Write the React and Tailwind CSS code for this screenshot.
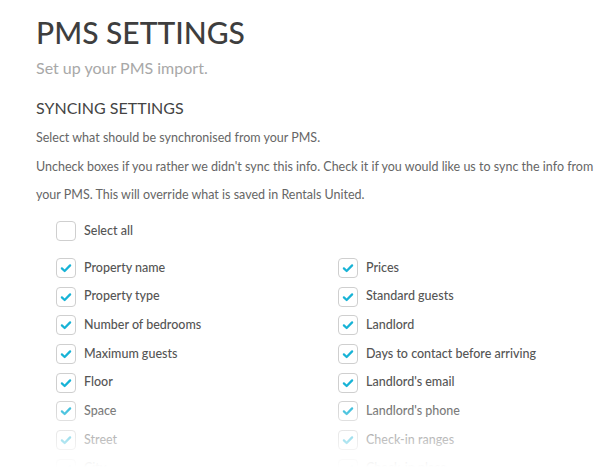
const left = [
  'Property name',
  'Property type',
  'Number of bedrooms',
  'Maximum guests',
  'Floor',
  'Space',
  'Street',
  'City',
]

const right = [
  'Prices',
  'Standard guests',
  'Landlord',
  'Days to contact before arriving',
  "Landlord's email",
  "Landlord's phone",
  'Check-in ranges',
  'Check-in place',
]

function Checkbox({ checked }) {
  return (
    <span className="flex h-5 w-5 shrink-0 items-center justify-center rounded-[4px] border border-[#cfcfcf] bg-white">
      {checked && (
        <svg viewBox="0 0 16 16" className="h-[12px] w-[12px]">
          <path
            d="M2.5 8.5 L6.2 12 L13.5 4.5"
            fill="none"
            stroke="#17b3d6"
            strokeWidth="3"
            strokeLinecap="round"
            strokeLinejoin="round"
          />
        </svg>
      )}
    </span>
  )
}

function Option({ label, checked = true }) {
  return (
    <label className="flex h-[28.67px] items-center gap-2">
      <Checkbox checked={checked} />
      <span className="text-[12.5px] font-medium text-[#555]">{label}</span>
    </label>
  )
}

export default function App() {
  return (
    <div className="relative h-[467px] overflow-hidden bg-white font-['Lato',sans-serif]">
      <div className="pl-9 pr-1 pt-[12px]">
        <h1 className="text-[30px] leading-[40px] font-medium text-[#3e3e3e]">PMS SETTINGS</h1>
        <p className="mt-[6px] text-[16px] leading-5 text-[#a8a8a8]">Set up your PMS import.</p>

        <h2 className="mt-[20px] text-[16px] leading-5 text-[#444]">SYNCING SETTINGS</h2>
        <p className="mt-[10px] text-[12.5px] leading-5 text-[#666]">
          Select what should be synchronised from your PMS.
        </p>
        <p className="mt-[5px] text-[12.5px] leading-[28px] text-[#666]">
          Uncheck boxes if you rather we didn't sync this info. Check it if you would like us to sync the info from
          your PMS. This will override what is saved in Rentals United.
        </p>

        <div className="mt-[8px] pl-5">
          <Option label="Select all" checked={false} />
          <div className="mt-[8px] grid grid-cols-[282px_1fr]">
            <div>
              {left.map((l) => (
                <Option key={l} label={l} />
              ))}
            </div>
            <div>
              {right.map((l) => (
                <Option key={l} label={l} />
              ))}
            </div>
          </div>
        </div>
      </div>
      <div className="pointer-events-none absolute inset-x-0 bottom-0 h-[72px] bg-gradient-to-b from-white/0 to-white" />
    </div>
  )
}
